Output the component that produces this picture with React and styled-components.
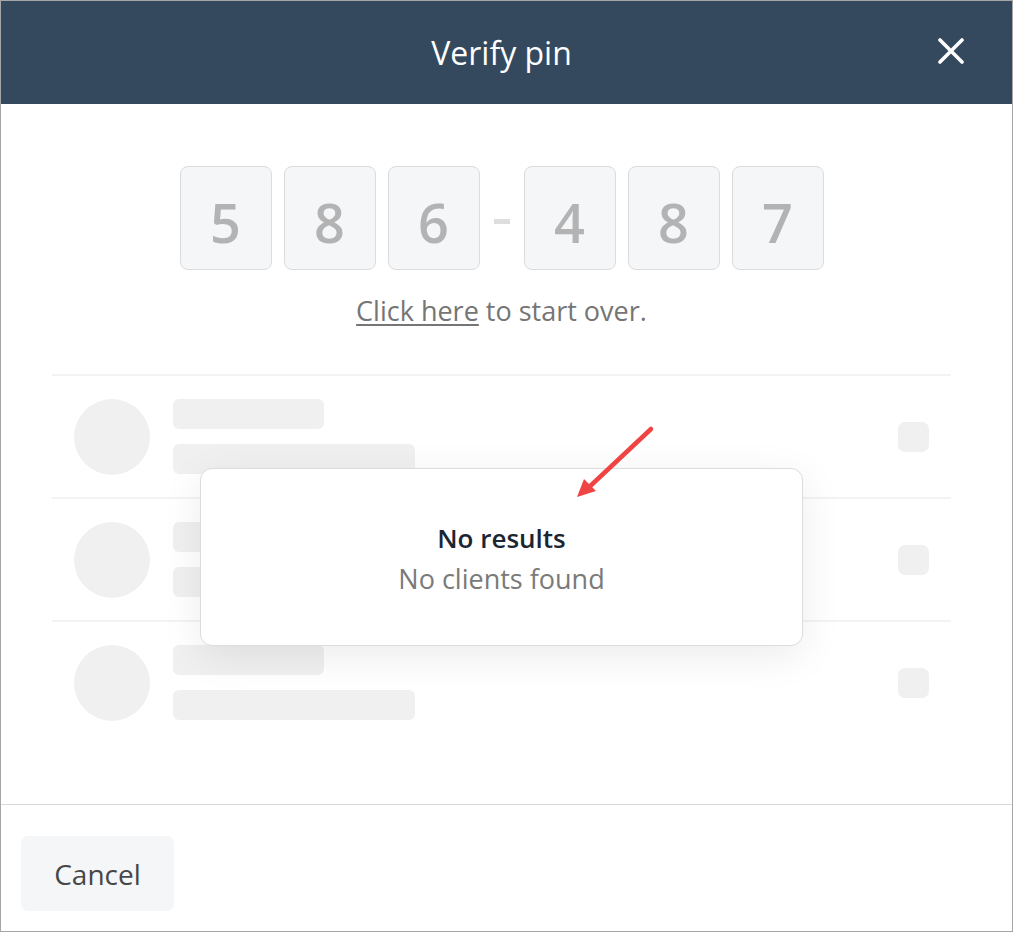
import React from 'react';
import styled, { createGlobalStyle } from 'styled-components';

const GlobalStyle = createGlobalStyle`
  html, body {
    margin: 0;
    padding: 0;
    background: #fff;
  }
  body {
    font-family: "Open Sans", "Noto Sans", "Liberation Sans", sans-serif;
  }
  * { box-sizing: border-box; }
`;

const Frame = styled.div`
  width: 1013px;
  height: 932px;
  border: 1px solid #a6a6a6;
  display: flex;
  flex-direction: column;
  background: #fff;
`;

const Header = styled.header`
  position: relative;
  height: 103px;
  flex: none;
  background: #34495e;
  display: flex;
  align-items: center;
  justify-content: center;
  padding-right: 10px;
`;

const Title = styled.h1`
  margin: 0;
  color: #fff;
  font-size: 32px;
  font-weight: 400;
`;

const CloseButton = styled.button`
  position: absolute;
  right: 48px;
  top: 37px;
  width: 26px;
  height: 26px;
  padding: 0;
  border: none;
  background: transparent;
  cursor: pointer;
  display: flex;
`;

const Body = styled.main`
  flex: 1;
  display: flex;
  flex-direction: column;
  align-items: center;
  padding: 62px 61px 0 51px;
`;

const PinRow = styled.div`
  display: flex;
  align-items: center;
  gap: 12px;
`;

const PinBox = styled.div`
  width: 92px;
  height: 104px;
  padding-top: 7px;
  border: 1px solid #dcdcdc;
  border-radius: 8px;
  background: #f5f6f8;
  display: flex;
  align-items: center;
  justify-content: center;
  font-size: 54px;
  font-weight: 600;
  color: #b3b3b3;
`;

const Dash = styled.span`
  width: 16px;
  height: 5px;
  margin: 6px 2px 0;
  background: #dedede;
`;

const Restart = styled.p`
  margin: 24px 0 0;
  line-height: 34px;
  font-size: 27px;
  color: #757575;
`;

const RestartLink = styled.a`
  color: #757575;
  text-decoration: underline;
  text-underline-offset: 3px;
  cursor: pointer;
`;

const List = styled.div`
  position: relative;
  align-self: stretch;
  margin-top: 46px;
`;

const Row = styled.div`
  display: flex;
  align-items: center;
  height: 123px;
  padding: 0 22px;
  border-top: 2px solid #f3f3f3;
`;

const Avatar = styled.div`
  width: 76px;
  height: 76px;
  border-radius: 50%;
  background: #f0f0f0;
  flex: none;
`;

const Lines = styled.div`
  flex: 1;
  display: flex;
  flex-direction: column;
  gap: 15px;
  margin-left: 23px;
`;

const Bar = styled.div`
  width: ${props => props.width}px;
  height: 30px;
  border-radius: 6px;
  background: #f0f0f0;
`;

const Square = styled.div`
  width: 31px;
  height: 30px;
  border-radius: 7px;
  background: #f0f0f0;
`;

const EmptyCard = styled.div`
  position: absolute;
  left: 148px;
  right: 148px;
  top: 94px;
  height: 178px;
  border: 1px solid #dcdcdc;
  border-radius: 12px;
  background: #fff;
  box-shadow: 0 10px 40px rgba(0, 0, 0, 0.08);
  display: flex;
  flex-direction: column;
  align-items: center;
  justify-content: center;
  gap: 5px;
  padding-top: 2px;
`;

const EmptyTitle = styled.div`
  font-size: 26px;
  font-weight: 600;
  color: #1c2633;
  line-height: 36px;
`;

const EmptyText = styled.div`
  font-size: 27px;
  color: #7a7a7a;
  line-height: 36px;
`;

const Arrow = styled.svg`
  position: absolute;
  left: 520px;
  top: 49px;
  pointer-events: none;
`;

const Footer = styled.footer`
  flex: none;
  height: 127px;
  border-top: 1px solid #d8d8d8;
  padding: 31px 20px 0;
`;

const CancelButton = styled.button`
  width: 153px;
  height: 75px;
  border: none;
  border-radius: 7px;
  background: #f5f6f8;
  font-family: inherit;
  font-size: 28px;
  color: #474747;
  cursor: pointer;
`;

const firstHalf = ['5', '8', '6'];
const secondHalf = ['4', '8', '7'];

const SkeletonRow = () => (
  <Row>
    <Avatar />
    <Lines>
      <Bar width={151} />
      <Bar width={242} />
    </Lines>
    <Square />
  </Row>
);

const App = () => (
  <>
    <GlobalStyle />
    <Frame>
      <Header>
        <Title>Verify pin</Title>
        <CloseButton aria-label="Close">
          <svg width="26" height="26" viewBox="0 0 26 26">
            <path d="M2 2 L24 24 M24 2 L2 24" stroke="#fff" strokeWidth="3.6" strokeLinecap="round" />
          </svg>
        </CloseButton>
      </Header>
      <Body>
        <PinRow>
          {firstHalf.map((d, i) => <PinBox key={`a${i}`}>{d}</PinBox>)}
          <Dash />
          {secondHalf.map((d, i) => <PinBox key={`b${i}`}>{d}</PinBox>)}
        </PinRow>
        <Restart>
          <RestartLink>Click here</RestartLink> to start over.
        </Restart>
        <List>
          <SkeletonRow />
          <SkeletonRow />
          <SkeletonRow />
          <EmptyCard>
            <EmptyTitle>No results</EmptyTitle>
            <EmptyText>No clients found</EmptyText>
          </EmptyCard>
          <Arrow width="90" height="80" viewBox="0 0 90 80">
            <path d="M79 6 L14 67" stroke="#f04444" strokeWidth="4.5" strokeLinecap="round" />
            <path d="M5 74 L12 56 L24 68 Z" fill="#f04444" />
          </Arrow>
        </List>
      </Body>
      <Footer>
        <CancelButton>Cancel</CancelButton>
      </Footer>
    </Frame>
  </>
);

export default App;
